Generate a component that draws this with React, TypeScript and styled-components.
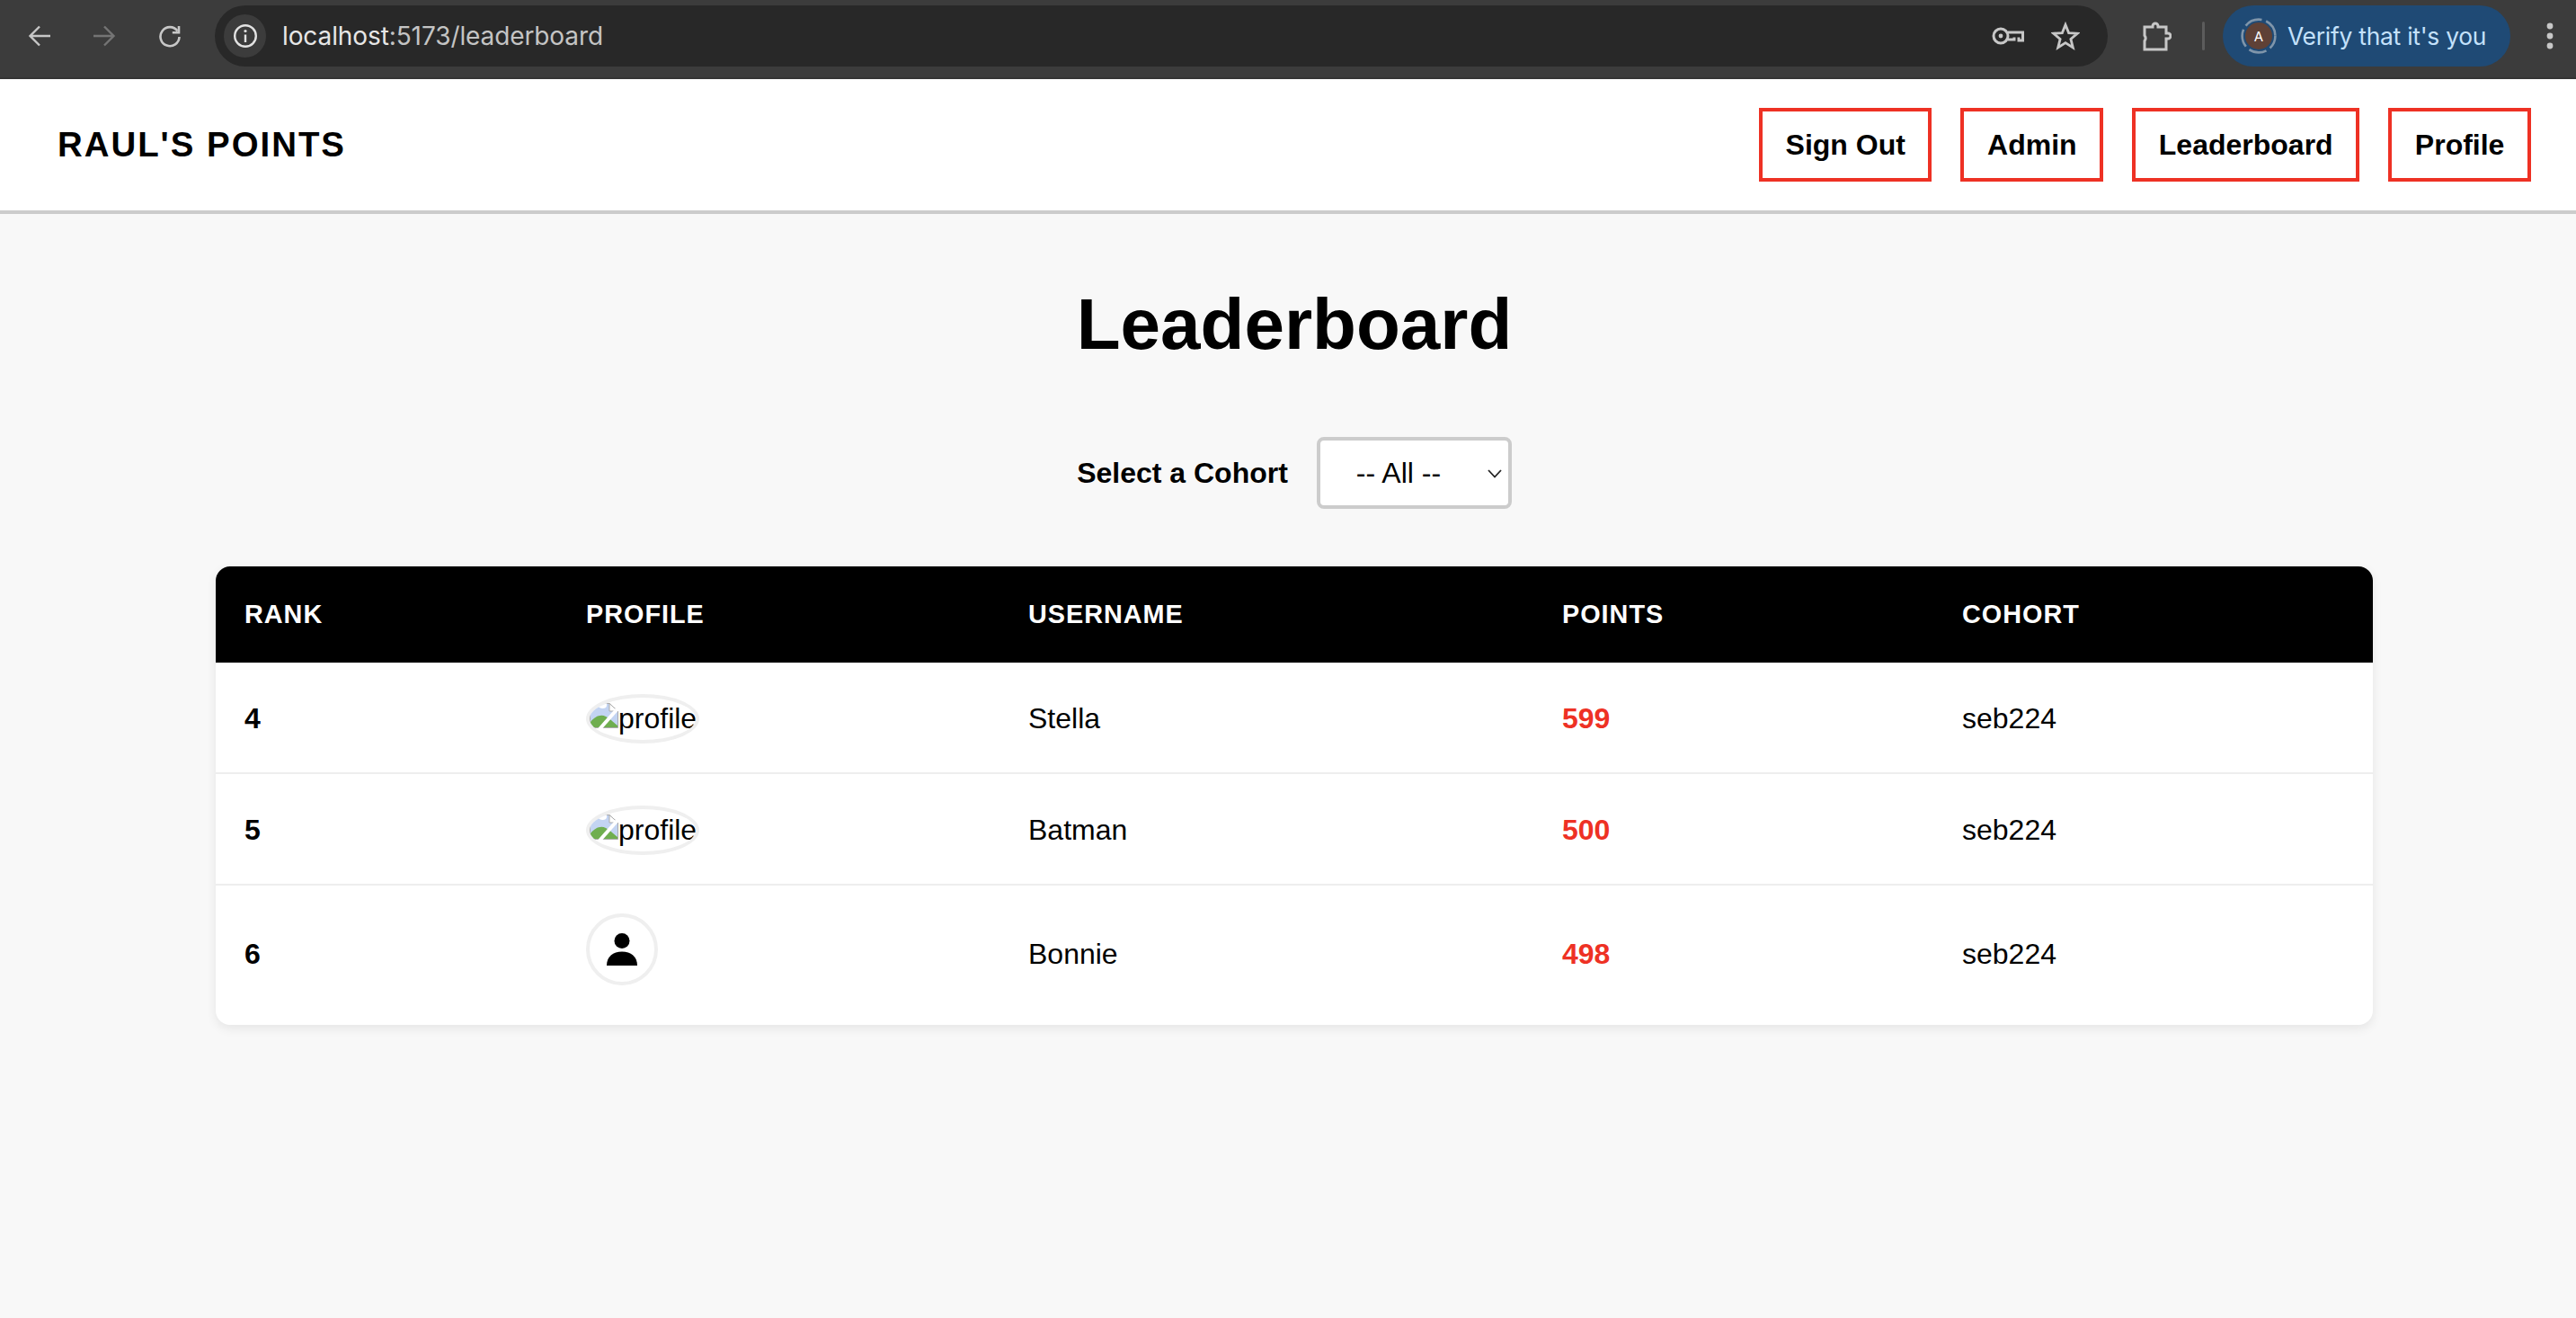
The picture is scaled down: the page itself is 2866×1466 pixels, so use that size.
import React from "react";
import styled, { createGlobalStyle } from "styled-components";

const Global = createGlobalStyle`
  html, body { margin: 0; padding: 0; height: 100%; background: #f8f8f8; }
  body { font-family: "Liberation Sans", Arial, sans-serif; color: #000; overflow: hidden; }
  * { box-sizing: border-box; }
`;

const Page = styled.div`
  display: flex;
  flex-direction: column;
  height: 1466px;
`;

/* ---------- browser chrome ---------- */
const Chrome = styled.div`
  height: 88px;
  flex: none;
  display: flex;
  align-items: center;
  background: #3c3c3c;
  border-bottom: 2px solid #353535;
  padding: 0 0 6px 31px;
`;
const ToolIcon = styled.svg<{ $ml?: number; $dim?: boolean }>`
  flex: none;
  margin-left: ${(p) => p.$ml ?? 0}px;
  color: ${(p) => (p.$dim ? "#747474" : "#c7c7c7")};
  display: block;
`;
const Omnibox = styled.div`
  width: 2106px;
  height: 68px;
  margin-left: 37px;
  border-radius: 34px;
  background: #282828;
  display: flex;
  align-items: center;
  padding: 0 31px 0 10px;
  flex: none;
`;
const InfoChip = styled.div`
  width: 47px;
  height: 48px;
  border-radius: 50%;
  background: #3c3c3c;
  display: flex;
  align-items: center;
  justify-content: center;
  flex: none;
`;
const Url = styled.div`
  margin-left: 18px;
  font: 400 28px "Inter", sans-serif;
  letter-spacing: -0.1px;
  color: #c4c4c4;
  flex: 1;
  white-space: nowrap;
`;
const UrlHost = styled.span`
  color: #e6e6e6;
`;
const Separator = styled.div`
  width: 3px;
  height: 32px;
  margin-left: 34px;
  border-radius: 2px;
  background: #5c5c5c;
  flex: none;
`;
const VerifyPill = styled.div`
  width: 320px;
  height: 68px;
  margin-left: 20px;
  border-radius: 34px;
  background: #1f4a75;
  display: flex;
  align-items: center;
  padding-left: 20px;
  flex: none;
`;
const AvatarRing = styled.div`
  position: relative;
  width: 40px;
  height: 40px;
  flex: none;
  display: flex;
  align-items: center;
  justify-content: center;
`;
const RingSvg = styled.svg`
  position: absolute;
  inset: 0;
`;
const AvatarLetter = styled.div`
  width: 30px;
  height: 30px;
  border-radius: 50%;
  background: #5f4136;
  color: #fff;
  font: 400 15px "Inter", sans-serif;
  display: flex;
  align-items: center;
  justify-content: center;
`;
const VerifyText = styled.div`
  margin-left: 12px;
  font: 400 26.4px "Inter", sans-serif;
  letter-spacing: -0.25px;
  color: #c4e1fb;
  white-space: nowrap;
`;

/* ---------- site header ---------- */
const Header = styled.header`
  height: 150px;
  flex: none;
  background: #fff;
  border-bottom: 4px solid #ccc;
  display: flex;
  align-items: center;
  justify-content: space-between;
  padding: 0 50px 0 64px;
`;
const Logo = styled.div`
  font-size: 38.4px;
  font-weight: 700;
  letter-spacing: 2px;
`;
const Nav = styled.nav`
  display: flex;
  gap: 32px;
`;
const NavLink = styled.a`
  height: 82px;
  display: flex;
  align-items: center;
  padding: 0 25.6px;
  border: 4px solid #ee3124;
  font-size: 32px;
  font-weight: 700;
  color: #000;
`;

/* ---------- content ---------- */
const Main = styled.main`
  flex: 1;
  display: flex;
  flex-direction: column;
  align-items: center;
  padding: 77px 0 0 14px;
`;
const Title = styled.h1`
  margin: 0;
  font-size: 80px;
  line-height: 92px;
  font-weight: 700;
`;
const Filter = styled.div`
  display: flex;
  align-items: center;
  gap: 32px;
  margin-top: 79px;
`;
const FilterLabel = styled.label`
  font-size: 32px;
  font-weight: 700;
`;
const SelectWrap = styled.div`
  position: relative;
  width: 217px;
  height: 80px;
`;
const Select = styled.select`
  appearance: none;
  width: 100%;
  height: 100%;
  padding: 0 0 0 40px;
  border: 4px solid #ccc;
  border-radius: 8px;
  background: #fff;
  font: 400 32px "Liberation Sans", Arial, sans-serif;
  color: #000;
`;
const Chevron = styled.svg`
  position: absolute;
  right: 11px;
  top: 36px;
  pointer-events: none;
`;

const Card = styled.div`
  width: 2400px;
  margin-top: 64px;
  border-radius: 16px;
  overflow: hidden;
  background: #fff;
  box-shadow: 0 4px 12px rgba(0, 0, 0, 0.08);
`;
const Table = styled.table`
  width: 100%;
  table-layout: fixed;
  border-collapse: collapse;
`;
const Col = styled.col<{ $w: number }>`
  width: ${(p) => p.$w}px;
`;
const Th = styled.th`
  height: 107px;
  padding: 0 32px;
  background: #000;
  color: #fff;
  text-align: left;
  font-size: 28.8px;
  font-weight: 700;
  letter-spacing: 1px;
`;
const Td = styled.td<{ $bold?: boolean; $red?: boolean }>`
  padding: 2px 32px 0;
  font-size: 32px;
  font-weight: ${(p) => (p.$bold ? 700 : 400)};
  color: ${(p) => (p.$red ? "#ee3124" : "#000")};
`;
const Tr = styled.tr`
  border-bottom: 2px solid #eee;
  &:last-child {
    border-bottom: none;
  }
  &:last-child ${Td} {
    padding: 0 32px 2px;
  }
`;
const AvatarCell = styled.td`
  padding: 35px 32px 32px;
  font-size: 32px;
`;
const BrokenAvatar = styled.div`
  width: 126px;
  height: 55px;
  border: 4px solid #efefef;
  border-radius: 50%;
  overflow: hidden;
  display: flex;
  align-items: center;
  white-space: nowrap;
`;
const BrokenSvg = styled.svg`
  flex: none;
  margin-bottom: 8px;
`;
const PlaceholderAvatar = styled.div`
  width: 80px;
  height: 80px;
  margin-bottom: 12px;
  margin-top: -4px;
  border: 4px solid #efefef;
  border-radius: 50%;
  display: flex;
  align-items: center;
  justify-content: center;
`;

const BrokenIcon = () => (
  <BrokenSvg width="32" height="28" viewBox="0 0 32 28">
    <path d="M0.5 0.5H22L31.5 9V27.5H0.5Z" fill="#c3d4f2" stroke="#ababab" strokeWidth="1" />
    <path d="M22 0.5V9H31.5Z" fill="#fff" stroke="#ababab" strokeWidth="1" />
    <path d="M8 0H19V3C19 6 14 7 11 5C9 4 8 2 8 0Z" fill="#fff" />
    <path d="M1 27V21C6 15 12 12 18 15C24 18 28 23 31 25V27Z" fill="#6fae4f" />
    <path d="M34 3L11 29" stroke="#fff" strokeWidth="4" />
  </BrokenSvg>
);

const rows = [
  { rank: 4, name: "Stella", points: 599 },
  { rank: 5, name: "Batman", points: 500 },
  { rank: 6, name: "Bonnie", points: 498, placeholder: true },
];

export default function App() {
  return (
    <Page>
      <Global />
      <Chrome>
        <ToolIcon width="26" height="26" viewBox="0 0 26 26" fill="none" stroke="currentColor" strokeWidth="2.4">
          <path d="M25 13H3M13 2.5L2.5 13L13 23.5" />
        </ToolIcon>
        <ToolIcon $dim $ml={46} width="26" height="26" viewBox="0 0 26 26" fill="none" stroke="currentColor" strokeWidth="2.4">
          <path d="M1 13H23M13 2.5L23.5 13L13 23.5" />
        </ToolIcon>
        <ToolIcon $ml={47} width="26" height="26" viewBox="0 0 26 26" fill="none" stroke="currentColor" strokeWidth="2.6">
          <path d="M21.5 7.5A10.5 10.5 0 1 0 23.5 14" />
          <path d="M23 2V9.2H15.8" />
        </ToolIcon>
        <Omnibox>
          <InfoChip>
            <svg width="28" height="28" viewBox="0 0 28 28" fill="none" stroke="#e3e3e3" strokeWidth="2.4">
              <circle cx="14" cy="14" r="11.8" />
              <path d="M14 12.5V21" />
              <circle cx="14" cy="8.5" r="1.6" fill="#e3e3e3" stroke="none" />
            </svg>
          </InfoChip>
          <Url>
            <UrlHost>localhost</UrlHost>:5173/leaderboard
          </Url>
          <svg width="36" height="22" viewBox="0 0 36 22" fill="none" stroke="#c7c7c7" strokeWidth="3">
            <circle cx="10" cy="11" r="8" />
            <circle cx="10" cy="11" r="2.4" fill="#c7c7c7" stroke="none" />
            <path d="M18 7H34.5V16H30V12.5M25 12.5V15H18" />
          </svg>
          <svg style={{ marginLeft: 30 }} width="32" height="32" viewBox="0 0 32 32" fill="none" stroke="#c7c7c7" strokeWidth="2.8">
            <path d="M16 3.5L19.6 12.6L29.4 13.2L21.9 19.4L24.3 28.9L16 23.6L7.7 28.9L10.1 19.4L2.6 13.2L12.4 12.6Z" />
          </svg>
        </Omnibox>
        <ToolIcon $ml={38} width="33" height="33" viewBox="0 0 33 33" fill="none" stroke="currentColor" strokeWidth="3">
          <path d="M3 6H12V5A3 3 0 0 1 18 5V6H27V13H29A3 3 0 0 1 29 19H27V31H3V21.5A5 5 0 0 0 3 15.5Z" />
        </ToolIcon>
        <Separator />
        <VerifyPill>
          <AvatarRing>
            <RingSvg width="40" height="40" viewBox="0 0 40 40" fill="none" stroke="#7f95aa" strokeWidth="2.6">
              <circle cx="20" cy="20" r="18.4" strokeDasharray="20 4.9" strokeDashoffset="5" />
            </RingSvg>
            <AvatarLetter>A</AvatarLetter>
          </AvatarRing>
          <VerifyText>Verify that it's you</VerifyText>
        </VerifyPill>
        <ToolIcon $ml={40} width="8" height="30" viewBox="0 0 8 30" fill="#c7c7c7">
          <circle cx="4" cy="4" r="3.4" />
          <circle cx="4" cy="15" r="3.4" />
          <circle cx="4" cy="26" r="3.4" />
        </ToolIcon>
      </Chrome>

      <Header>
        <Logo>RAUL'S POINTS</Logo>
        <Nav>
          <NavLink>Sign Out</NavLink>
          <NavLink>Admin</NavLink>
          <NavLink>Leaderboard</NavLink>
          <NavLink>Profile</NavLink>
        </Nav>
      </Header>

      <Main>
        <Title>Leaderboard</Title>
        <Filter>
          <FilterLabel>Select a Cohort</FilterLabel>
          <SelectWrap>
            <Select defaultValue="all">
              <option value="all">-- All --</option>
            </Select>
            <Chevron width="16" height="10" viewBox="0 0 16 10" fill="none" stroke="#222" strokeWidth="1.8">
              <path d="M1 1L8 8.5L15 1" />
            </Chevron>
          </SelectWrap>
        </Filter>

        <Card>
          <Table>
            <colgroup>
              <Col $w={380} />
              <Col $w={492} />
              <Col $w={594} />
              <Col $w={445} />
              <Col $w={489} />
            </colgroup>
            <thead>
              <tr>
                <Th>RANK</Th>
                <Th>PROFILE</Th>
                <Th>USERNAME</Th>
                <Th>POINTS</Th>
                <Th>COHORT</Th>
              </tr>
            </thead>
            <tbody>
              {rows.map((r) => (
                <Tr key={r.rank}>
                  <Td $bold>{r.rank}</Td>
                  <AvatarCell>
                    {r.placeholder ? (
                      <PlaceholderAvatar>
                        <svg width="34" height="36" viewBox="0 0 34 36" fill="#000">
                          <circle cx="17" cy="8.5" r="8.5" />
                          <path d="M0 36C0 26 7 20.5 17 20.5C27 20.5 34 26 34 36Z" />
                        </svg>
                      </PlaceholderAvatar>
                    ) : (
                      <BrokenAvatar>
                        <BrokenIcon />
                        profile
                      </BrokenAvatar>
                    )}
                  </AvatarCell>
                  <Td>{r.name}</Td>
                  <Td $bold $red>
                    {r.points}
                  </Td>
                  <Td>seb224</Td>
                </Tr>
              ))}
            </tbody>
          </Table>
        </Card>
      </Main>
    </Page>
  );
}
